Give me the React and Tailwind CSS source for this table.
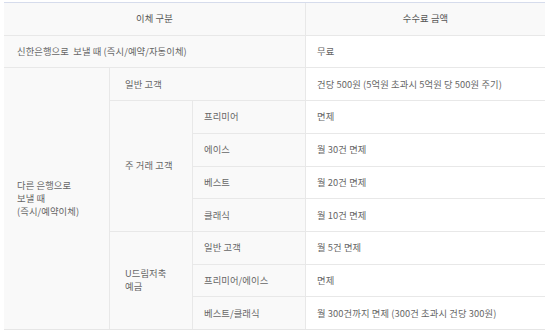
import React from 'react';

const label = 'bg-[#f9f9f9] flex items-center text-[#666]';
const value = 'bg-white flex items-center text-[#666]';

const App = () => {
  return (
    <div className="w-[550px] h-[330px] bg-white pt-[2px] pl-[4px]" style={{ fontFamily: '"Noto Sans CJK KR", "Noto Sans", sans-serif' }}>
      <div className="w-[541px] border-t border-[#d6dcec] border-b border-b-[#e6e6e6] bg-[#e8e8e8]">
        <div className="grid grid-cols-[106px_83px_113px_239px] grid-rows-[repeat(10,minmax(0,1fr))] gap-y-px h-[326px] text-[9.3px] leading-[13px] tracking-[0.1px]">
          {/* Header */}
          <div className="col-span-3 bg-[#f9f9f9] flex items-center justify-center text-[#555] border-r border-[#e8e8e8]">이체 구분</div>
          <div className="bg-[#f9f9f9] flex items-center justify-center text-[#555]">수수료 금액</div>

          {/* Same bank */}
          <div className={`col-span-3 ${label} pl-[13px] border-r border-[#e8e8e8]`}>신한은행으로&nbsp;&nbsp;보낼 때 (즉시/예약/자동이체)</div>
          <div className={`${value} pl-[11px]`}>무료</div>

          {/* Other bank */}
          <div className={`row-span-8 ${label} pl-[13px] border-r border-[#e8e8e8]`}>
            <span>다른 은행으로<br />보낼 때<br />(즉시/예약이체)</span>
          </div>

          <div className={`col-span-2 ${label} pl-[15px] border-r border-[#e8e8e8]`}>일반 고객</div>
          <div className={`${value} pl-[11px]`}>건당 500원 (5억원 초과시 5억원 당 500원 주기)</div>

          <div className={`row-span-4 ${label} pl-[15px] border-r border-[#e8e8e8]`}>주 거래 고객</div>
          <div className={`${label} pl-[11px] border-r border-[#e8e8e8]`}>프리미어</div>
          <div className={`${value} pl-[11px]`}>면제</div>
          <div className={`${label} pl-[11px] border-r border-[#e8e8e8]`}>에이스</div>
          <div className={`${value} pl-[11px]`}>월 30건 면제</div>
          <div className={`${label} pl-[11px] border-r border-[#e8e8e8]`}>베스트</div>
          <div className={`${value} pl-[11px]`}>월 20건 면제</div>
          <div className={`${label} pl-[11px] border-r border-[#e8e8e8]`}>클래식</div>
          <div className={`${value} pl-[11px]`}>월 10건 면제</div>

          <div className={`row-span-3 ${label} pl-[15px] border-r border-[#e8e8e8]`}>
            <span>U드림저축<br />예금</span>
          </div>
          <div className={`${label} pl-[11px] border-r border-[#e8e8e8]`}>일반 고객</div>
          <div className={`${value} pl-[11px]`}>월 5건 면제</div>
          <div className={`${label} pl-[11px] border-r border-[#e8e8e8]`}>프리미어/에이스</div>
          <div className={`${value} pl-[11px]`}>면제</div>
          <div className={`${label} pl-[11px] border-r border-[#e8e8e8]`}>베스트/클래식</div>
          <div className={`${value} pl-[11px]`}>월 300건까지 면제 (300건 초과시 건당 300원)</div>
        </div>
      </div>
    </div>
  );
};

export default App;
